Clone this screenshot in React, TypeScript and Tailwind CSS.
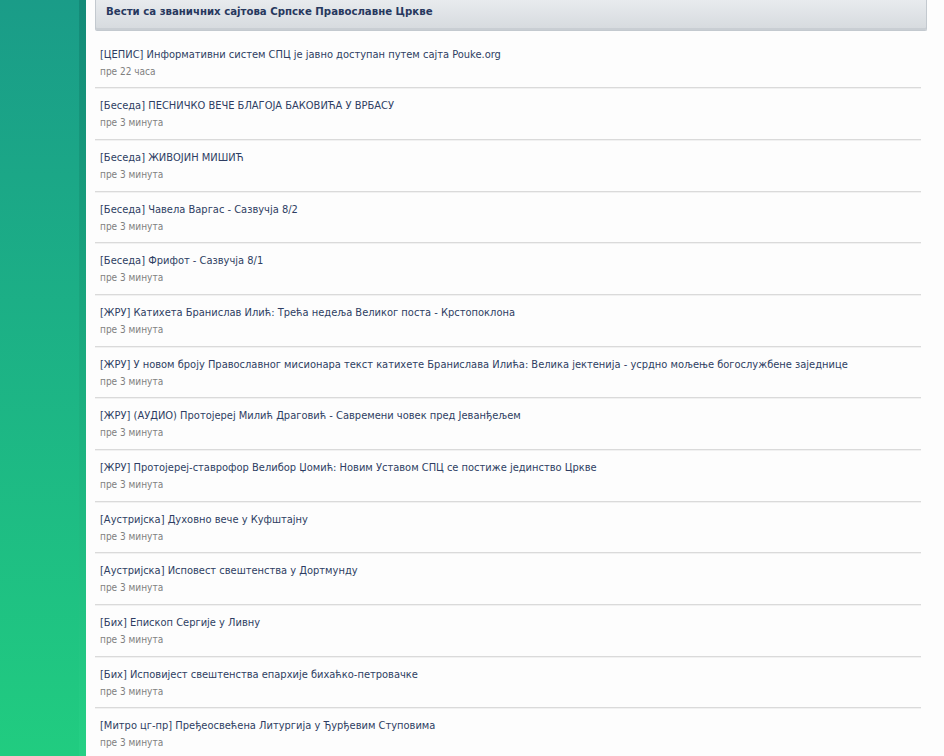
import React from "react";

type NewsItem = { title: string; time: string };

const items: NewsItem[] = [
  { title: "[ЦЕПИС] Информативни систем СПЦ је јавно доступан путем сајта Pouke.org", time: "пре 22 часа" },
  { title: "[Беседа] ПЕСНИЧКО ВЕЧЕ БЛАГОЈА БАКОВИЋА У ВРБАСУ", time: "пре 3 минута" },
  { title: "[Беседа] ЖИВОЈИН МИШИЋ", time: "пре 3 минута" },
  { title: "[Беседа] Чавела Варгас - Сазвучја 8/2", time: "пре 3 минута" },
  { title: "[Беседа] Фрифот - Сазвучја 8/1", time: "пре 3 минута" },
  { title: "[ЖРУ] Катихета Бранислав Илић: Трећа недеља Великог поста - Крстопоклона", time: "пре 3 минута" },
  { title: "[ЖРУ] У новом броју Православног мисионара текст катихете Бранислава Илића: Велика јектенија - усрдно мољење богослужбене заједнице", time: "пре 3 минута" },
  { title: "[ЖРУ] (АУДИО) Протојереј Милић Драговић - Савремени човек пред Јеванђељем", time: "пре 3 минута" },
  { title: "[ЖРУ] Протојереј-ставрофор Велибор Џомић: Новим Уставом СПЦ се постиже јединство Цркве", time: "пре 3 минута" },
  { title: "[Аустријска] Духовно вече у Куфштајну", time: "пре 3 минута" },
  { title: "[Аустријска] Исповест свештенства у Дортмунду", time: "пре 3 минута" },
  { title: "[Бих] Епископ Сергије у Ливну", time: "пре 3 минута" },
  { title: "[Бих] Исповијест свештенства епархије бихаћко-петровачке", time: "пре 3 минута" },
  { title: "[Митро цг-пр] Пређеосвећена Литургија у Ђурђевим Ступовима", time: "пре 3 минута" },
];

export default function App() {
  return (
    <div
      className="flex h-[756px] w-[944px] overflow-hidden bg-[#fdfdfd]"
      style={{ fontFamily: "'DejaVu Sans Condensed', 'DejaVu Sans', sans-serif", fontStretch: "condensed" }}
    >
      {/* side strip */}
      <div className="flex h-full w-[86px] shrink-0 bg-gradient-to-b from-[#1a9c88] to-[#21cc80]">
        <div className="flex-1" />
        <div className="h-full w-[7px] bg-gradient-to-b from-[#148a78] to-[#25d084]" />
      </div>

      <div className="flex min-w-0 flex-1 flex-col pl-[9px]">
        <div className="flex h-[31px] w-[832px] shrink-0 items-start rounded-b-[2px] border border-t-0 border-[#c3c9cf] bg-gradient-to-b from-[#e8ebee] to-[#d6dade] pl-[10px] pt-[4px] shadow-[inset_0_-2px_0_#c9ced3]">
          <span className="text-[11.3px] font-bold leading-[16px] text-[#27385e]">
            Вести са званичних сајтова Српске Православне Цркве
          </span>
        </div>

        <div className="mt-[5.5px] flex w-[826px] shrink-0 flex-col">
          {items.map((it, i) => (
            <div
              key={i}
              className="shrink-0 border-b border-[#dadada] pb-[7.7px] pl-[5px] pt-[9px] shadow-[0_1px_0_#f1f1f1]"
            >
              <div className="whitespace-nowrap text-[11px] leading-[17px] text-[#2e3d63]">
                {it.title}
              </div>
              <div className="text-[10px] leading-[17px] text-[#808080]">{it.time}</div>
            </div>
          ))}
        </div>
      </div>
    </div>
  );
}
